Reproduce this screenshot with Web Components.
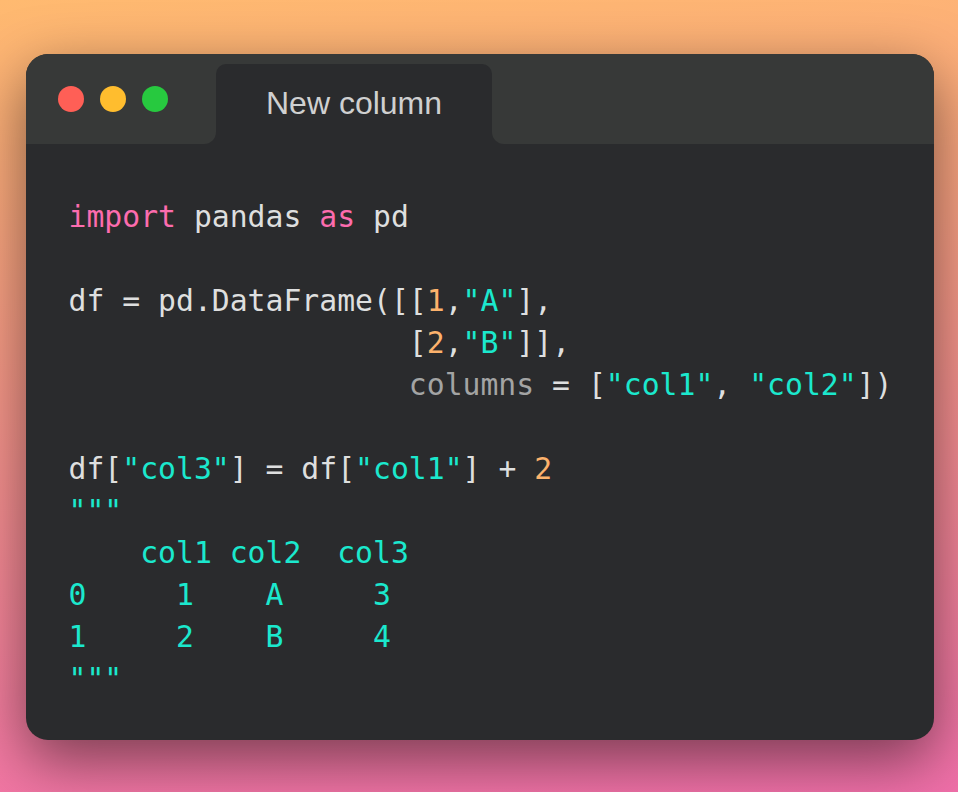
<!DOCTYPE html>
<html>
<head>
<meta charset="utf-8">
<title>New column</title>
<style>
  html, body { margin: 0; height: 100%; }
</style>
</head>
<body>
<code-backdrop>
  <code-window name="New column">
    <code-block></code-block>
  </code-window>
</code-backdrop>

<script>
class CodeBackdrop extends HTMLElement {
  constructor() {
    super();
    this.attachShadow({mode: 'open'});
  }
  connectedCallback() {
    this.shadowRoot.innerHTML = `
      <style>
        :host {
          display: block;
          box-sizing: border-box;
          width: 958px;
          height: 792px;
          padding: 54px 24px 52px 26px;
          overflow: hidden;
          background: linear-gradient(175deg, #ffba70 0%, #f06fa9 100%);
        }
      </style>
      <slot></slot>
    `;
  }
}

class TrafficLights extends HTMLElement {
  constructor() {
    super();
    this.attachShadow({mode: 'open'});
  }
  connectedCallback() {
    this.shadowRoot.innerHTML = `
      <style>
        :host { display: flex; gap: 16px; }
        span { width: 26px; height: 26px; border-radius: 50%; }
        .red { background: #ff5f56; }
        .yellow { background: #ffbd2e; }
        .green { background: #27c93f; }
      </style>
      <span class="red"></span>
      <span class="yellow"></span>
      <span class="green"></span>
    `;
  }
}

class CodeWindow extends HTMLElement {
  constructor() {
    super();
    this.attachShadow({mode: 'open'});
  }
  connectedCallback() {
    this.shadowRoot.innerHTML = `
      <style>
        :host {
          display: flex;
          flex-direction: column;
          height: 100%;
          border-radius: 22px;
          background: #2a2b2d;
          box-shadow: 0 20px 60px rgba(0, 0, 0, .5);
          overflow: hidden;
        }
        .bar { display: flex; height: 90px; flex: none; }
        .left {
          width: 190px;
          box-sizing: border-box;
          padding: 32px 0 0 32px;
          background: #373938;
          border-bottom-right-radius: 12px;
        }
        .tab-wrap { width: 276px; background: #373938; padding-top: 10px; }
        .tab {
          height: 100%;
          box-sizing: border-box;
          background: #2a2b2d;
          border-radius: 10px 10px 0 0;
          text-align: center;
          font: 32px/78px "Liberation Sans", Arial, sans-serif;
          color: #cfd0d0;
        }
        .right {
          flex: 1;
          background: #373938;
          border-bottom-left-radius: 12px;
        }
        .body { padding: 52px 0 0 42.5px; }
      </style>
      <div class="bar">
        <div class="left"><traffic-lights></traffic-lights></div>
        <div class="tab-wrap"><div class="tab">${this.getAttribute('name')}</div></div>
        <div class="right"></div>
      </div>
      <div class="body"><slot></slot></div>
    `;
  }
}

class CodeBlock extends HTMLElement {
  constructor() {
    super();
    this.attachShadow({mode: 'open'});
  }
  connectedCallback() {
    this.shadowRoot.innerHTML = `
      <style>
        :host { display: block; }
        pre {
          margin: 0;
          font: 29.75px/42px "DejaVu Sans Mono", monospace;
          color: #dedfdf;
        }
        .k { color: #fc6cae; }
        .n { color: #fcb26c; }
        .s { color: #1be8cd; }
        .a { color: #a3a4a4; }
      </style>
      <pre><span class="k">import</span> pandas <span class="k">as</span> pd

df = pd.DataFrame([[<span class="n">1</span>,<span class="s">"A"</span>],
                   [<span class="n">2</span>,<span class="s">"B"</span>]],
                   <span class="a">columns</span> = [<span class="s">"col1"</span>, <span class="s">"col2"</span>])

df[<span class="s">"col3"</span>] = df[<span class="s">"col1"</span>] + <span class="n">2</span>
<span class="s">"""
    col1 col2  col3
0     1    A     3
1     2    B     4
"""</span></pre>
    `;
  }
}

customElements.define('code-backdrop', CodeBackdrop);
customElements.define('traffic-lights', TrafficLights);
customElements.define('code-window', CodeWindow);
customElements.define('code-block', CodeBlock);
</script>
</body>
</html>
